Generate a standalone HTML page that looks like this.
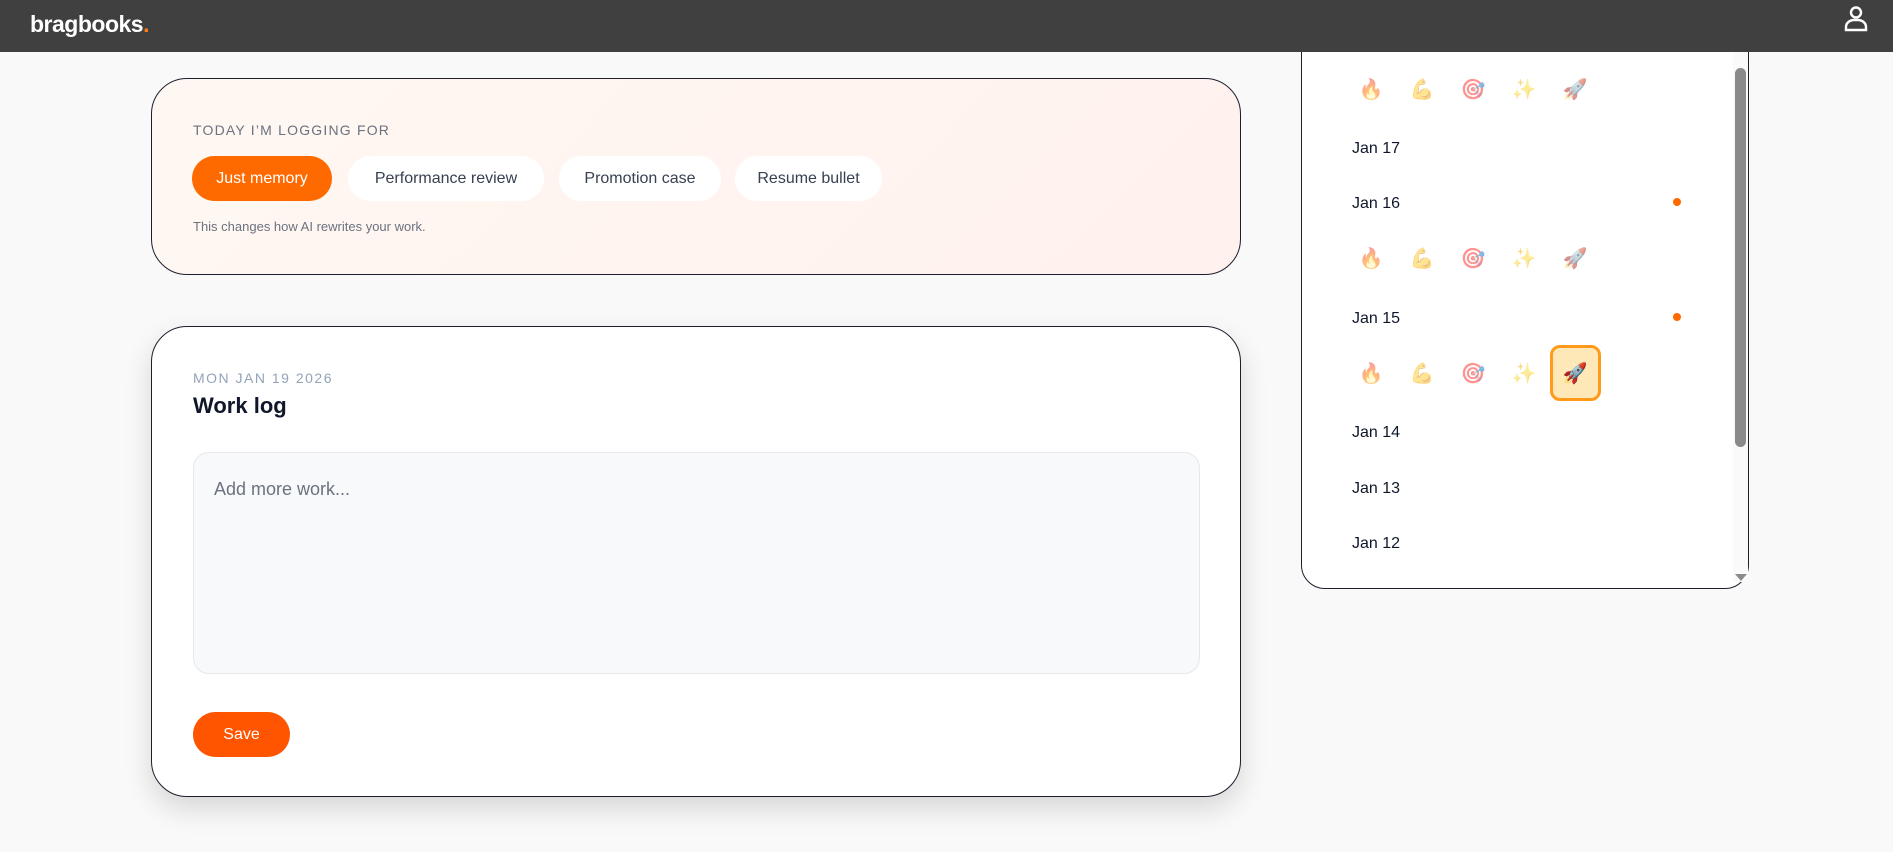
<!DOCTYPE html>
<html><head><meta charset="utf-8"><style>
*{box-sizing:border-box;margin:0;padding:0}
body{width:1893px;height:852px;background:#f9f9f9;font-family:"Liberation Sans",sans-serif;position:relative;overflow:hidden;color:#0f172a}
.hdr{position:absolute;left:0;top:0;width:1893px;height:52px;background:#404040;z-index:5}
.logo{position:absolute;left:30px;top:11px;color:#fff;font-weight:bold;font-size:23px;letter-spacing:-0.5px}
.logo span{color:#ff7a1a}
.card1{position:absolute;left:151px;top:78px;width:1090px;height:197px;border:1px solid #1e1e2e;border-radius:36px;background:linear-gradient(135deg,#fff8f2,#fff1ee)}
.lbl{position:absolute;left:41px;top:43px;font-size:14px;letter-spacing:1.2px;color:#6b7280}
.chip{position:absolute;top:77px;height:45px;border-radius:23px;background:#fff;font-size:16px;color:#374151;display:flex;align-items:center;justify-content:center}
.chip.on{background:#ff6a00;color:#fff}
.help{position:absolute;left:41px;top:140px;font-size:13px;color:#6b7280}
.card2{position:absolute;left:151px;top:326px;width:1090px;height:471px;border:1px solid #1e1e2e;border-radius:36px;background:#fff;box-shadow:0 12px 28px rgba(0,0,0,.14)}
.date{position:absolute;left:41px;top:43px;font-size:14px;letter-spacing:1.5px;color:#94a3b8}
.title{position:absolute;left:41px;top:66px;font-size:22px;font-weight:bold;color:#0f172a}
.ta{position:absolute;left:41px;top:125px;width:1007px;height:222px;border:1px solid #e5e7eb;border-radius:16px;background:#f8f9fa;padding:26px 20px;font-size:18px;color:#6b7280}
.save{position:absolute;left:41px;top:385px;width:97px;height:45px;border-radius:23px;background:#ff5500;color:#fff;font-size:16px;display:flex;align-items:center;justify-content:center}
.panel{position:absolute;left:1301px;top:20px;width:448px;height:569px;border:1px solid #1e1e2e;border-radius:0 0 24px 24px;background:#fff;overflow:hidden}
.sb{position:absolute;left:1733px;top:52px;width:15px;height:530px;background:#fafafa}
.thumb{position:absolute;left:1735px;top:68px;width:11px;height:379px;background:#8a8a8a;border-radius:6px}
.arr{position:absolute;left:1735px;top:574px;width:0;height:0;border-left:6px solid transparent;border-right:6px solid transparent;border-top:7px solid #8a8a8a}
.d{position:absolute;left:1352px;font-size:16px;color:#0f172a}
.e{position:absolute;font-size:20px;opacity:.5;width:30px;text-align:center;font-family:"Noto Color Emoji","DejaVu Sans",sans-serif}
.dot{position:absolute;left:1673px;width:8px;height:8px;border-radius:50%;background:#ff6a00}
.hl{position:absolute;left:1550px;top:345px;width:51px;height:56px;border:3px solid #ff9a1a;border-radius:10px;background:#ffe8b8}
</style></head><body>
<div class="hdr"><div class="logo">bragbooks<span>.</span></div>
<svg style="position:absolute;left:1843px;top:4px" width="26" height="28" viewBox="0 0 26 28" fill="none" stroke="#fff" stroke-width="2.4"><circle cx="13" cy="8.5" r="5"/><path d="M3 26 V23 A8 7 0 0 1 11 16 H15 A8 7 0 0 1 23 23 V26 Z"/></svg>
</div>
<div class="card1">
<div class="lbl">TODAY I’M LOGGING FOR</div>
<div class="chip on" style="left:40px;width:140px">Just memory</div>
<div class="chip" style="left:196px;width:196px">Performance review</div>
<div class="chip" style="left:407px;width:162px">Promotion case</div>
<div class="chip" style="left:583px;width:147px">Resume bullet</div>
<div class="help">This changes how AI rewrites your work.</div>
</div>
<div class="card2">
<div class="date">MON JAN 19 2026</div>
<div class="title">Work log</div>
<div class="ta">Add more work...</div>
<div class="save">Save</div>
</div>
<div class="panel"></div>
<div class="hl"></div>
<div class="e" style="left:1356px;top:77px">🔥</div><div class="e" style="left:1407px;top:77px">💪</div><div class="e" style="left:1458px;top:77px">🎯</div><div class="e" style="left:1509px;top:77px">✨</div><div class="e" style="left:1560px;top:77px">🚀</div>
<div class="d" style="top:140px">Jan 17</div>
<div class="d" style="top:195px">Jan 16</div><div class="dot" style="top:198px"></div>
<div class="e" style="left:1356px;top:246px">🔥</div><div class="e" style="left:1407px;top:246px">💪</div><div class="e" style="left:1458px;top:246px">🎯</div><div class="e" style="left:1509px;top:246px">✨</div><div class="e" style="left:1560px;top:246px">🚀</div>
<div class="d" style="top:310px">Jan 15</div><div class="dot" style="top:313px"></div>
<div class="e" style="left:1356px;top:361px">🔥</div><div class="e" style="left:1407px;top:361px">💪</div><div class="e" style="left:1458px;top:361px">🎯</div><div class="e" style="left:1509px;top:361px">✨</div><div class="e" style="left:1560px;top:361px;opacity:1">🚀</div>
<div class="d" style="top:424px">Jan 14</div>
<div class="d" style="top:480px">Jan 13</div>
<div class="d" style="top:535px">Jan 12</div>
<div class="sb"></div><div class="thumb"></div><div class="arr"></div>
</body></html>
